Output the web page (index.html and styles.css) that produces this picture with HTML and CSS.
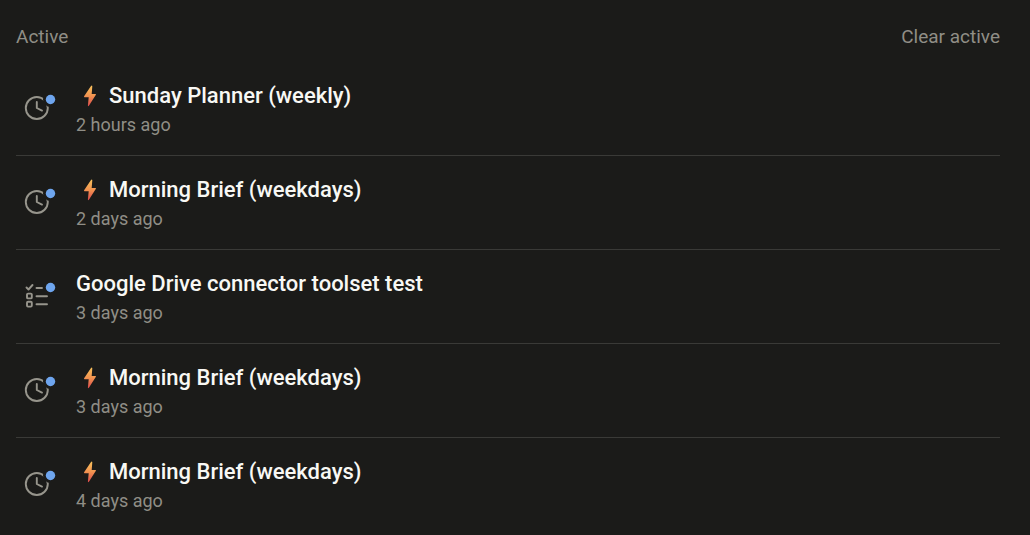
FILE: index.html
```html
<!DOCTYPE html>
<html lang="en">
<head>
<meta charset="utf-8">
<title>Active tasks</title>
<link rel="stylesheet" href="styles.css">
</head>
<body>
<svg class="defs" width="0" height="0" aria-hidden="true">
  <defs>
    <linearGradient id="spark" x1="0" y1="0" x2="0" y2="1">
      <stop offset="0" stop-color="#f8c25c"/>
      <stop offset="0.5" stop-color="#f29350"/>
      <stop offset="1" stop-color="#dc4a4c"/>
    </linearGradient>
    <mask id="notch" maskUnits="userSpaceOnUse" x="0" y="0" width="32" height="32">
      <rect width="32" height="32" fill="#fff"/>
      <circle cx="26.5" cy="7.5" r="7.5" fill="#000"/>
    </mask>
    <symbol id="clock" viewBox="0 0 32 32">
      <g fill="none" stroke="#97958c" stroke-width="1.900" stroke-linecap="round" stroke-linejoin="round">
        <circle cx="12.800" cy="16" r="11" mask="url(#notch)"/>
        <path d="M12.800 10v6l5.200 2.600"/>
      </g>
      <circle cx="26.500" cy="7.500" r="4.700" fill="#6ea5ee"/>
    </symbol>
    <symbol id="list" viewBox="0 0 32 32">
      <g fill="none" stroke="#97958c" stroke-width="1.900" stroke-linecap="round" stroke-linejoin="round">
        <path d="M2.500 7.500l2 2 4-4.500M12.500 8h5.500M12.500 16.200h10.500M12.500 24.200h10.500"/>
        <rect x="3" y="13.600" width="4.800" height="4.800" rx="1"/>
        <rect x="3" y="21.800" width="4.800" height="4.800" rx="1"/>
      </g>
      <circle cx="26.500" cy="7.500" r="4.700" fill="#6ea5ee"/>
    </symbol>
    <symbol id="bolt" viewBox="0 0 14 22">
      <path d="M8 1L1.100 11.300q-.4.900.5.900h4.100L4.900 20.500q.2 1.100 1 .3L12.900 9.800q.4-.9-.5-.9H8.700L9.300 1.300q-.2-1.200-1.300-.3z" fill="url(#spark)"/>
    </symbol>
  </defs>
</svg>
<main class="panel">
  <header class="panel-head">
    <h2 class="heading">Active</h2>
    <button class="clear" type="button">Clear active</button>
  </header>
  <ul class="tasks">
    <li class="task">
      <svg class="icon" aria-hidden="true"><use href="#clock"/></svg>
      <div class="body">
        <h3 class="title"><svg class="bolt" aria-hidden="true"><use href="#bolt"/></svg>Sunday Planner (weekly)</h3>
        <p class="time">2 hours ago</p>
      </div>
    </li>
    <li class="task">
      <svg class="icon" aria-hidden="true"><use href="#clock"/></svg>
      <div class="body">
        <h3 class="title"><svg class="bolt" aria-hidden="true"><use href="#bolt"/></svg>Morning Brief (weekdays)</h3>
        <p class="time">2 days ago</p>
      </div>
    </li>
    <li class="task">
      <svg class="icon" aria-hidden="true"><use href="#list"/></svg>
      <div class="body">
        <h3 class="title">Google Drive connector toolset test</h3>
        <p class="time">3 days ago</p>
      </div>
    </li>
    <li class="task">
      <svg class="icon" aria-hidden="true"><use href="#clock"/></svg>
      <div class="body">
        <h3 class="title"><svg class="bolt" aria-hidden="true"><use href="#bolt"/></svg>Morning Brief (weekdays)</h3>
        <p class="time">3 days ago</p>
      </div>
    </li>
    <li class="task">
      <svg class="icon" aria-hidden="true"><use href="#clock"/></svg>
      <div class="body">
        <h3 class="title"><svg class="bolt" aria-hidden="true"><use href="#bolt"/></svg>Morning Brief (weekdays)</h3>
        <p class="time">4 days ago</p>
      </div>
    </li>
  </ul>
</main>
</body>
</html>
```
FILE: styles.css
```css
* {
  box-sizing: border-box;
  margin: 0;
  padding: 0;
}

body {
  background: #1b1b19;
  color: #f8f8f4;
  font-family: Roboto, "Liberation Sans", sans-serif;
}

.defs {
  position: absolute;
}

.panel {
  padding: 23px 30px 0 16px;
}

.panel-head {
  display: flex;
  align-items: center;
  justify-content: space-between;
  margin-bottom: 11px;
}

.heading,
.clear,
.time {
  color: #908e86;
  font: inherit;
  font-size: 19px;
  line-height: 28px;
}

.clear {
  background: none;
  border: 0;
  cursor: pointer;
}

.tasks {
  list-style: none;
}

.task {
  display: flex;
  align-items: flex-start;
  gap: 20px;
  padding: 19px 0 15px 8px;
}

.task + .task {
  border-top: 1px solid #3a3a37;
}

.icon {
  flex: none;
  width: 32px;
  height: 32px;
  margin-top: 11px;
}

.title {
  display: flex;
  align-items: center;
  font-size: 22px;
  font-weight: 500;
  line-height: 29px;
}

.time {
  font-size: 18px;
  line-height: 30px;
}

.bolt {
  width: 14px;
  height: 22px;
  margin: 0 12px 0 7px;
}
```
